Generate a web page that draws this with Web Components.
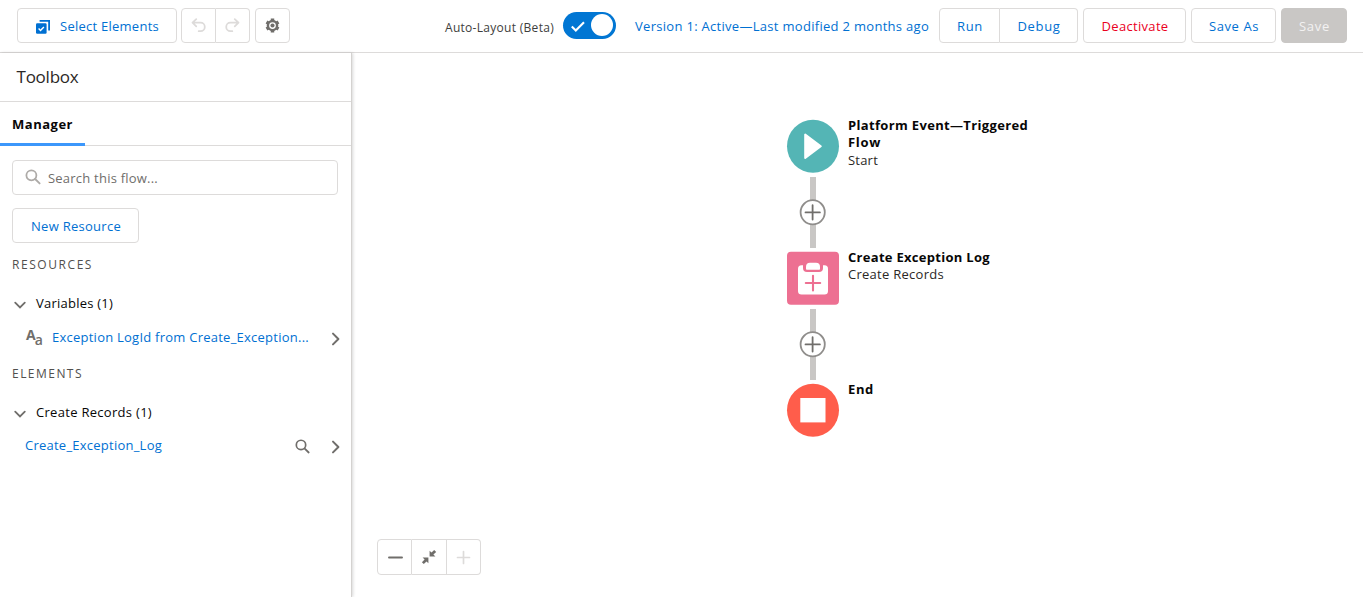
<!DOCTYPE html>
<html lang="en"><head><meta charset="utf-8"><title>Flow Builder</title>
<style>
html,body{margin:0;height:100%;overflow:hidden;background:#fff}
body{font:13px/17px "Open Sans","Noto Sans",sans-serif;color:#080707}
</style></head><body>
<flow-app></flow-app>
<script>
const define=(name,html,setup)=>customElements.define(name,class extends HTMLElement{
  connectedCallback(){
    if(this.shadowRoot)return;
    const t=document.createElement('template');
    t.innerHTML=typeof html==='function'?html(this):html;
    this.attachShadow({mode:'open'}).append(t.content.cloneNode(true));
    if(setup)setup(this);
  }
});

/* Single line of text, tracked so that it fills the width given in "w". */
define('ui-text','<style>:host{display:inline-block;white-space:nowrap;flex:none}</style><slot></slot>',el=>{
  const w=+el.getAttribute('w');
  if(!w)return;
  const natural=el.getBoundingClientRect().width;
  el.style.letterSpacing=((w-natural)/el.textContent.trim().length).toFixed(3)+'px';
  el.style.width=w+'px';
});

const icons={
  select:[16,16,'<path d="M4.6 1.9H14.1V11.4" fill="none" stroke="currentColor" stroke-width="1.8"/><rect x="1" y="4.2" width="10.6" height="10.6" rx="1.2" fill="currentColor"/><path d="M3.6 9.5l1.9 1.9 3.4-3.5" fill="none" stroke="#fff" stroke-width="1.4"/>'],
  undo:[16,16,'<path d="M5.6 1.2L1.6 5l4 3.9M2 5h8.2a4.5 4.5 0 0 1 0 9H8.2" fill="none" stroke="currentColor" stroke-width="1.9" stroke-linecap="round" stroke-linejoin="round"/>'],
  redo:[16,16,'<path d="M10.4 1.2L14.4 5l-4 3.9M14 5H5.8a4.5 4.5 0 0 0 0 9h2" fill="none" stroke="currentColor" stroke-width="1.9" stroke-linecap="round" stroke-linejoin="round"/>'],
  gear:[16,16,'<path d="M8 .6v3M8 12.4v3M1.6 4.3l2.6 1.5M11.8 10.2l2.6 1.5M1.6 11.7l2.6-1.5M11.8 5.8l2.6-1.5" stroke="currentColor" stroke-width="3.7"/><circle cx="8" cy="8" r="4.9" fill="#fff" stroke="currentColor" stroke-width="2.6"/><circle cx="8" cy="8" r="2.2" fill="currentColor"/>'],
  search:[16,16,'<circle cx="6.4" cy="6.3" r="5" fill="none" stroke="currentColor" stroke-width="1.8"/><path d="M10.1 10l4.5 4.4" stroke="currentColor" stroke-width="1.9" stroke-linecap="round"/>'],
  down:[12,12,'<path d="M1.2 3.7L6 8.5l4.8-4.8" fill="none" stroke="currentColor" stroke-width="1.8" stroke-linecap="round"/>'],
  right:[12,14,'<path d="M3 1.6L8.4 7 3 12.4" fill="none" stroke="currentColor" stroke-width="2" stroke-linecap="round" stroke-linejoin="round"/>'],
  minus:[16,16,'<path d="M2 8.5h13" stroke="currentColor" stroke-width="1.9" stroke-linecap="round"/>'],
  plus:[16,16,'<path d="M1.6 8h12.8M8 1.6v12.8" stroke="currentColor" stroke-width="1.8" stroke-linecap="round"/>'],
  fit:[16,16,'<path fill="currentColor" d="M8.6 1.8v5.8h5.8l-2-2L15.2 3 13.2 1l-2.7 2.6zM7.4 14.2V8.6H1.6l2 2L.9 13.2l1.9 1.9 2.7-2.6z"/>'],
  start:[52,53,'<ellipse cx="26" cy="26.2" rx="26" ry="26.5" fill="#54b5b5"/><path d="M18.2 14.6v23.4L33.8 26.3z" fill="#fff" stroke="#fff" stroke-width="2" stroke-linejoin="round"/>'],
  create:[52,53,'<rect y="-.3" width="52" height="53" rx="4" fill="#ed7092"/><rect x="11" y="13.2" width="30" height="29.2" rx="3.5" fill="#fff"/><path d="M16 12.8v3.2q0 4 4 4h12q4 0 4-4V12.8z" fill="#ed7092"/><path d="M19 17V14.7q0-4 4-4h6q4 0 4 4v2.3q0 .8-.8.8H19.8q-.8 0-.8-.8z" fill="#fff"/><path d="M18.8 31h14.4M26 23.8v14.6" stroke="#ed7092" stroke-width="2.1" stroke-linecap="round"/>'],
  end:[52,53,'<ellipse cx="26" cy="26.2" rx="26" ry="26.5" fill="#ff5d4b"/><rect x="13.3" y="14" width="25.2" height="24.4" fill="#fff"/>'],
  add:[26,26,'<circle cx="12.7" cy="13.3" r="12.1" fill="#fff" stroke="#8f8d8b" stroke-width="1.8"/><path d="M5.5 13.4h14.4M12.6 6.2v14.4" stroke="#706e6b" stroke-width="1.8" stroke-linecap="round"/>']
};
define('ui-icon',el=>{
  const [w,h,body]=icons[el.getAttribute('name')],s=+(el.getAttribute('size')||w);
  return `<style>:host{display:inline-block;flex:none;width:${s}px;height:${s*h/w}px}svg{display:block;overflow:visible}</style><svg width="${s}" height="${s*h/w}" viewBox="0 0 ${w} ${h}">${body}</svg>`;
});

define('ui-button',el=>`<style>
:host{display:flex;flex:none;box-sizing:border-box;height:35px;width:${el.getAttribute('w')}px;border:1px solid #dddbda;border-radius:4px;background:#fff;color:#0070d2;align-items:center;justify-content:center;line-height:17px}
:host([pos=first]){border-radius:4px 0 0 4px}
:host([pos=mid]){border-radius:0;border-left:0}
:host([pos=last]){border-radius:0 4px 4px 0;border-left:0}
:host([kind=danger]){color:#ea001e}
:host([kind=off]){color:#dddbda}
:host([kind=icon]){color:#706e6b}
:host([kind=solid]){background:#c9c7c5;border-color:#c9c7c5;color:#f3f2f2}
::slotted(ui-text){margin:2px 0 0 1px}
</style><slot></slot>`);

define('ui-toggle',`<style>
:host{display:flex;flex:none;box-sizing:border-box;width:53px;height:27px;border-radius:14px;background:#0176d3;align-items:center;justify-content:space-between;padding:0 3px 0 7px}
i{width:22px;height:22px;border-radius:50%;background:#fff;margin-top:-1px}
</style><svg width="16" height="14" viewBox="0 0 16 14"><path d="M1.8 7.6l4 4L14 3.2" fill="none" stroke="#fff" stroke-width="2.1"/></svg><i></i>`);

define('flow-header',`<style>
:host{display:flex;box-sizing:border-box;height:53px;padding:8px 16px 0 17px;border-bottom:1px solid #dddbda;align-items:flex-start}
.g{display:flex;margin-left:5px}.first{margin-left:4px}
.sel{margin:2px 8px 0 0}
.mid{display:flex;margin-left:auto;align-items:center;height:35px}
.beta{font-size:12px;color:#3e3e3c;margin:3px 9px 0 0}
.ver{color:#0070d2;margin-right:10px;margin-top:2px}
ui-toggle{margin-right:19px}
.end{margin-left:5px}
</style>
<ui-button w="160"><ui-icon class="sel" name="select"></ui-icon><ui-text w="99">Select Elements</ui-text></ui-button>
<div class="g first"><ui-button kind="off" pos="first" w="35"><ui-icon name="undo" size="15"></ui-icon></ui-button><ui-button kind="off" pos="last" w="34"><ui-icon name="redo" size="15"></ui-icon></ui-button></div>
<div class="g"><ui-button kind="icon" w="35"><ui-icon name="gear" size="15"></ui-icon></ui-button></div>
<div class="mid"><ui-text class="beta" w="109">Auto-Layout (Beta)</ui-text><ui-toggle></ui-toggle><ui-text class="ver" w="294">Version 1: Active—Last modified 2 months ago</ui-text></div>
<ui-button pos="first" w="61"><ui-text w="26">Run</ui-text></ui-button><ui-button pos="last" w="78"><ui-text w="43">Debug</ui-text></ui-button>
<ui-button class="end" kind="danger" w="103"><ui-text w="67">Deactivate</ui-text></ui-button>
<ui-button class="end" w="85"><ui-text w="50">Save As</ui-text></ui-button>
<ui-button class="end" kind="solid" w="66"><ui-text w="31">Save</ui-text></ui-button>`);

define('toolbox-row',`<style>
:host{display:flex;height:22px;align-items:center;color:#0070d2}
.a{display:flex;align-items:center;gap:20px;margin-left:auto;padding:3px 9px 0 0;color:#706e6b}
</style><slot></slot><div class="a"><slot name="actions"></slot><ui-icon name="right"></ui-icon></div>`);

define('toolbox-group',`<style>
:host{display:flex;height:22px;align-items:center;padding-left:14px;gap:10px}
ui-icon{color:#706e6b;margin-top:3px}
</style><ui-icon name="down"></ui-icon><slot></slot>`);

define('type-glyph',`<style>
:host{display:flex;flex:none;width:18px;margin:-1px 8px 0 0;color:#706e6b;font:600 14px/17px "Open Sans",sans-serif}
b{font-weight:700}span{margin:5px 0 0 -1px}
</style><b>A</b><span>a</span>`);

define('flow-toolbox',`<style>
:host{display:block;box-sizing:border-box;width:352px;flex:none;border-right:1px solid #d4d2d0;box-shadow:1px 0 3px rgba(0,0,0,.16);position:relative}
.title{display:flex;align-items:center;box-sizing:border-box;height:49px;padding:0 0 0 16.5px;border-bottom:1px solid #dddbda;font-size:17px;line-height:24px;color:#2b2826}
.tabs{display:flex;box-sizing:border-box;height:44px;border-bottom:1px solid #dddbda}
.tab{box-sizing:border-box;width:85px;height:44px;border-bottom:3px solid #3c97fb;padding:14px 0 0 12px;font-weight:700}
.search{display:flex;align-items:center;box-sizing:border-box;margin:14px 13px 13px 12px;height:35px;border:1px solid #dddbda;border-radius:4px;padding-left:12px;color:#706e6b}
.search ui-icon{color:#aeaba8;margin:-1px 7px 0 0}
.search ui-text{margin-top:2px}
.new{margin-left:12px}
.cap{display:flex;height:18px;align-items:center;padding-left:12px;font-size:12px;color:#514f4d}
.c1{margin-top:12px}.g{margin-top:19px}.r{margin-top:12px}.c2{margin-top:16px}
.r1{padding-left:26px}.r2{padding-left:25px;margin-top:11px}
</style>
<div class="title"><ui-text w="62">Toolbox</ui-text></div>
<div class="tabs"><div class="tab"><ui-text w="61">Manager</ui-text></div></div>
<div class="search"><ui-icon name="search"></ui-icon><ui-text w="110">Search this flow...</ui-text></div>
<ui-button class="new" w="127"><ui-text w="90">New Resource</ui-text></ui-button>
<div class="cap c1"><ui-text w="81">RESOURCES</ui-text></div>
<toolbox-group class="g"><ui-text w="77">Variables (1)</ui-text></toolbox-group>
<toolbox-row class="r r1"><type-glyph></type-glyph><ui-text w="257">Exception LogId from Create_Exception...</ui-text></toolbox-row>
<div class="cap c2"><ui-text w="71">ELEMENTS</ui-text></div>
<toolbox-group class="g"><ui-text w="116">Create Records (1)</ui-text></toolbox-group>
<toolbox-row class="r2"><ui-text w="137">Create_Exception_Log</ui-text><ui-icon slot="actions" name="search" size="15" style="color:#706e6b"></ui-icon></toolbox-row>`);

define('flow-node',el=>`<style>
:host{display:flex;height:53px;gap:9px}
.t{display:flex;flex-direction:column;align-items:flex-start;margin-top:-3px;line-height:17.3px}
</style><ui-icon name="${el.getAttribute('icon')}"></ui-icon><div class="t"><slot></slot></div>`);

define('flow-link',`<style>
:host{display:flex;width:6px;height:71px;margin:4px 0 4px 23px;background:#c9c7c5;align-items:center;justify-content:center}
ui-icon{margin-bottom:1px}
</style><ui-icon name="add"></ui-icon>`);

define('flow-canvas',`<style>
:host{display:flex;flex:1;flex-direction:column;justify-content:space-between;box-sizing:border-box;padding:67px 0 22px 25px}
.flow{margin-left:410px}.zoom{display:flex}
.b{font-weight:700}
.s{color:#2b2826}
</style>
<div class="flow">
<flow-node icon="start"><ui-text class="b" w="180">Platform Event—Triggered</ui-text><ui-text class="b" w="33">Flow</ui-text><ui-text class="s" w="30">Start</ui-text></flow-node>
<flow-link></flow-link>
<flow-node icon="create"><ui-text class="b" w="142">Create Exception Log</ui-text><ui-text class="s" w="96">Create Records</ui-text></flow-node>
<flow-link></flow-link>
<flow-node icon="end"><ui-text class="b" w="26">End</ui-text></flow-node>
</div>
<div class="zoom"><ui-button kind="icon" pos="first" w="35" style="height:36px"><ui-icon name="minus"></ui-icon></ui-button><ui-button kind="icon" pos="mid" w="35" style="height:36px"><ui-icon name="fit"></ui-icon></ui-button><ui-button kind="off" pos="last" w="34" style="height:36px"><ui-icon name="plus" size="15"></ui-icon></ui-button></div>`);

define('flow-app',`<style>
:host{display:flex;flex-direction:column;height:100vh}
main{display:flex;flex:1;min-height:0}
</style><flow-header></flow-header><main><flow-toolbox></flow-toolbox><flow-canvas></flow-canvas></main>`);
</script>
</body></html>
